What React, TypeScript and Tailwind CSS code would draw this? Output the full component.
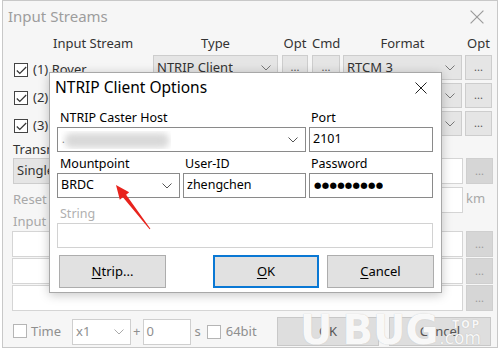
import React from "react";

const Chevron = ({ c = "#666" }: { c?: string }) => (
  <svg width="10" height="6" viewBox="0 0 10 6" className="shrink-0">
    <polyline points="0.5,0.5 5,5 9.5,0.5" fill="none" stroke={c} strokeWidth="1" />
  </svg>
);

const XIcon = ({ size = 13, c = "#333" }: { size?: number; c?: string }) => (
  <svg width={size} height={size} viewBox="0 0 12 12" className="shrink-0">
    <line x1="0.5" y1="0.5" x2="11.5" y2="11.5" stroke={c} strokeWidth="1" />
    <line x1="11.5" y1="0.5" x2="0.5" y2="11.5" stroke={c} strokeWidth="1" />
  </svg>
);

const CheckBox = ({ checked = false, muted = false }: { checked?: boolean; muted?: boolean }) => (
  <div
    className={`w-[14px] h-[14px] shrink-0 border bg-white flex items-center justify-center ${
      muted ? "border-[#b5b5b5]" : "border-[#444]"
    }`}
  >
    {checked && (
      <svg width="11" height="9" viewBox="0 0 11 9">
        <polyline points="0.8,4.5 3.8,7.5 10.2,1" fill="none" stroke="#333" strokeWidth="1.2" />
      </svg>
    )}
  </div>
);

const BgCombo = ({ text, w }: { text: string; w: string }) => (
  <div className={`${w} h-full shrink-0 bg-[#e5e5e5] border border-[#cdcdcd] flex items-center justify-between pl-[3px] pr-[6px] text-[13px] text-[#333]`}>
    <span className="whitespace-nowrap overflow-hidden">{text}</span>
    <Chevron c="#777" />
  </div>
);

const BgDots = ({ w, dark = false }: { w: string; dark?: boolean }) => (
  <div
    className={`${w} h-full shrink-0 border flex items-center justify-center text-[11px] leading-none pb-[2px] ${
      dark ? "bg-[#d6d6d6] border-[#cfcfcf] text-[#9a9a9a]" : "bg-[#e5e5e5] border-[#cdcdcd] text-[#555]"
    }`}
  >
    ...
  </div>
);

const StreamRow = ({ n, name }: { n: string; name: string }) => (
  <div className="flex h-[25px] items-stretch">
    <div className="w-[140px] shrink-0 flex items-center pl-[1px] pt-[5px]">
      <CheckBox checked />
      <span className="ml-[5px] text-[13px] text-[#333] whitespace-nowrap">
        ({n}) {name}
      </span>
    </div>
    <BgCombo text="NTRIP Client" w="w-[125px]" />
    <div className="ml-[4px] flex"><BgDots w="w-[26px]" /></div>
    <div className="ml-[4px] flex"><BgDots w="w-[28px]" /></div>
    <div className="ml-[3px] flex"><BgCombo text="RTCM 3" w="w-[119px]" /></div>
    <div className="ml-[3px] flex"><BgDots w="w-[27px]" /></div>
  </div>
);

const Field = ({
  w,
  children,
  combo = false,
  disabled = false,
}: {
  w: string;
  children?: React.ReactNode;
  combo?: boolean;
  disabled?: boolean;
}) => (
  <div
    className={`${w} h-[25px] shrink-0 bg-white border flex items-center justify-between pl-[3px] pr-[7px] text-[12.5px] text-black ${
      disabled ? "border-[#d2d2d2]" : "border-[#8a8a8a]"
    }`}
  >
    <div className="flex items-center whitespace-nowrap overflow-hidden">{children}</div>
    {combo && <Chevron c="#555" />}
  </div>
);

const DlgButton = ({ w, children, focus = false, cls = "" }: { w: string; children: React.ReactNode; focus?: boolean; cls?: string }) => (
  <div
    className={`${w} ${cls} h-[33px] shrink-0 bg-[#e1e1e1] flex items-center justify-center text-[13px] text-black ${
      focus ? "border-2 border-[#0a78d4]" : "border border-[#adadad]"
    }`}
  >
    {children}
  </div>
);

export default function App() {
  return (
    <div className="relative w-[500px] h-[352px] bg-white overflow-hidden font-['Noto_Sans',sans-serif]">
      {/* Background window: Input Streams */}
      <div className="ml-[2px] w-[496px] h-[348px] border border-[#c8c8c8] bg-[#f6f6f6] flex flex-col">
        {/* title bar */}
        <div className="h-[31px] shrink-0 flex items-center justify-between pl-[5px] pr-[13px]">
          <span className="text-[15px] text-[#9d9d9d]">Input Streams</span>
          <XIcon size={14} c="#9a9a9a" />
        </div>
        <div className="flex flex-col pl-[10px] pr-[4px]">
          {/* headers */}
          <div className="flex h-[23px] items-center text-[13px] text-[#333] leading-none">
            <div className="w-[140px] shrink-0 pl-[40px] whitespace-nowrap">Input Stream</div>
            <div className="w-[125px] shrink-0 text-center">Type</div>
            <div className="ml-[4px] w-[26px] shrink-0 text-center">Opt</div>
            <div className="ml-[4px] w-[28px] shrink-0 text-center">Cmd</div>
            <div className="ml-[3px] w-[119px] shrink-0 text-center">Format</div>
            <div className="ml-[3px] w-[27px] shrink-0 text-center">Opt</div>
          </div>
          <div className="flex flex-col gap-[3px]">
            <StreamRow n="1" name="Rover" />
            <StreamRow n="2" name="Base Station" />
            <StreamRow n="3" name="Correction" />
          </div>
          {/* transmit */}
          <div className="h-[21px] flex items-end text-[13px] text-[#333] leading-none pb-[1px] whitespace-nowrap">
            Transmit NMEA GPGGA to Base Station
          </div>
          <div className="h-[26px] mt-[1px] flex items-stretch">
            <BgCombo text="Single LLH" w="w-[120px]" />
            <div className="ml-auto w-[80px] bg-white border border-[#d5d5d5]" />
            <div className="ml-[3px] flex"><BgDots w="w-[27px]" dark /></div>
          </div>
          <div className="h-[26px] mt-[3px] flex items-center">
            <span className="text-[13px] text-[#a8a8a8] whitespace-nowrap">Reset Time</span>
            <div className="ml-auto w-[80px] h-full bg-white border border-[#d5d5d5]" />
            <span className="ml-[3px] w-[27px] text-[13px] text-[#a8a8a8] pb-[2px]">km</span>
          </div>
          <div className="h-[18px] flex items-center text-[13px] text-[#a8a8a8] whitespace-nowrap">
            Input Stream Log
          </div>
          <div className="flex flex-col gap-[1px]">
            {[0, 1, 2].map((i) => (
              <div key={i} className="h-[26px] flex items-stretch">
                <div className="-ml-[1px] flex-1 bg-white border border-[#d5d5d5]" />
                <div className="ml-[3px] flex"><BgDots w="w-[27px]" dark /></div>
              </div>
            ))}
          </div>
          {/* bottom row */}
          <div className="h-[29px] mt-[6px] flex items-center text-[13px] text-[#8f8f8f]">
            <div className="mt-[7px] flex items-center self-start">
              <CheckBox muted />
            </div>
            <span className="ml-[4px]">Time</span>
            <div className="ml-[11px] w-[59px] h-[26px] bg-white border border-[#cfcfcf] flex items-center justify-between pl-[3px] pr-[6px]">
              <span>x1</span>
              <Chevron c="#aaa" />
            </div>
            <span className="ml-[2px]">+</span>
            <div className="ml-[2px] w-[48px] h-[26px] bg-white border border-[#cfcfcf] flex items-center pl-[3px]">0</div>
            <span className="ml-[4px]">s</span>
            <div className="ml-[6px]"><CheckBox muted /></div>
            <span className="ml-[5px]">64bit</span>
            <div className="ml-auto w-[102px] h-[29px] bg-[#dedede] border border-[#c8c8c8] flex items-center justify-center text-[#555]">OK</div>
            <div className="ml-[10px] mr-[2px] w-[102px] h-[29px] bg-[#dedede] border border-[#c8c8c8] flex items-center justify-center text-[#555]">Cancel</div>
          </div>
        </div>
      </div>

      {/* Watermark */}
      <div className="absolute left-[300px] top-[310px] flex items-end pointer-events-none select-none font-['DejaVu_Sans',sans-serif] font-bold">
        <span className="text-[40px] leading-none text-white/90 [text-shadow:0_0_1px_#bbb]">U</span>
        <span className="text-[40px] leading-none text-white/90 ml-[10px] [text-shadow:0_0_1px_#bbb]">BUG</span>
        <div className="flex flex-col items-end ml-[1px] mb-[3px]">
          <span className="text-[10px] leading-none text-white/90 [text-shadow:0_0_1px_#aaa] tracking-[2px]">TOP</span>
          <span className="text-[17px] leading-none text-white/90 [text-shadow:0_0_1px_#aaa] font-normal">.com</span>
        </div>
      </div>

      {/* Dialog: NTRIP Client Options */}
      <div className="absolute left-[49px] top-[72px] w-[393px] h-[221px] bg-white border border-[#a8a8a8] shadow-[0_2px_10px_rgba(0,0,0,0.22)] flex flex-col">
        <div className="h-[30px] shrink-0 flex items-center justify-between pl-[5px] pr-[14px]">
          <span className="text-[15.5px] text-black">NTRIP Client Options</span>
          <XIcon size={12} c="#222" />
        </div>
        <div className="flex flex-col px-[7px]">
          <div className="h-[18px] mt-[6px] flex items-center text-[12.5px] text-black">
            <span className="pl-[3px] w-[252px]">NTRIP Caster Host</span>
            <span className="pl-[2px]">Port</span>
          </div>
          <div className="flex gap-[3px]">
            <Field w="w-[249px]" combo>
              <div className="relative w-[110px] h-[18px]">
                <div className="absolute left-[4px] top-[2px] w-[104px] h-[15px] rounded-[6px] bg-[#d9d9d9] blur-[3px]" />
                <span className="absolute left-[1px] top-[3px] text-[10px] text-[#777] leading-none">.</span>
              </div>
            </Field>
            <Field w="w-[124px]">2101</Field>
          </div>
          <div className="h-[18px] mt-[3px] flex items-center text-[12.5px] text-black">
            <span className="pl-[3px] w-[126px]">Mountpoint</span>
            <span className="pl-[2px] w-[126px]">User-ID</span>
            <span className="pl-[2px]">Password</span>
          </div>
          <div className="flex gap-[3px]">
            <Field w="w-[123px]" combo>BRDC</Field>
            <Field w="w-[123px]">zhengchen</Field>
            <Field w="w-[124px]">
              <span className="font-['DejaVu_Sans',sans-serif] text-[8.5px] tracking-[0.3px] pl-[1px]">●●●●●●●●●</span>
            </Field>
          </div>
          <div className="h-[18px] mt-[7px] flex items-center text-[12.5px] text-[#b0b0b0]">
            <span className="pl-[3px]">String</span>
          </div>
          <Field w="w-[376px]" disabled />
          <div className="mt-[7px] flex">
            <DlgButton w="w-[107px]" cls="ml-[2px]">
              <span><span className="underline underline-offset-2">N</span>trip...</span>
            </DlgButton>
            <DlgButton w="w-[106px]" cls="ml-auto" focus>
              <span><span className="underline underline-offset-2">O</span>K</span>
            </DlgButton>
            <DlgButton w="w-[107px]" cls="ml-[8px]">
              <span><span className="underline underline-offset-2">C</span>ancel</span>
            </DlgButton>
          </div>
        </div>
      </div>

      {/* Red arrow annotation */}
      <svg className="absolute left-0 top-0 pointer-events-none" width="500" height="352" viewBox="0 0 500 352">
        <polygon
          points="116,185 129.2,192.3 126.1,194.8 150.4,228.7 149.6,229.3 122.9,197.2 119.8,199.7"
          fill="#e8231d"
        />
      </svg>
    </div>
  );
}
